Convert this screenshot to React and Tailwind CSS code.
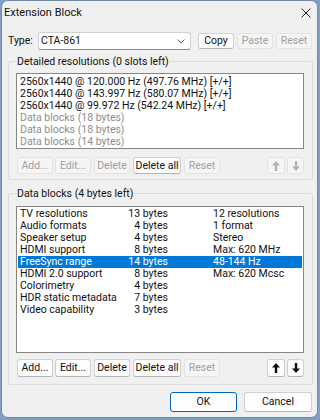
import React from 'react';

const resolutions = [
  { text: '2560x1440 @ 120.000 Hz (497.76 MHz) [+/+]', on: true },
  { text: '2560x1440 @ 143.997 Hz (580.07 MHz) [+/+]', on: true },
  { text: '2560x1440 @ 99.972 Hz (542.24 MHz) [+/+]', on: true },
  { text: 'Data blocks (18 bytes)', on: false },
  { text: 'Data blocks (18 bytes)', on: false },
  { text: 'Data blocks (14 bytes)', on: false },
];

const blocks = [
  ['TV resolutions', '13 bytes', '12 resolutions'],
  ['Audio formats', '4 bytes', '1 format'],
  ['Speaker setup', '4 bytes', 'Stereo'],
  ['HDMI support', '8 bytes', 'Max: 620 MHz'],
  ['FreeSync range', '14 bytes', '48-144 Hz'],
  ['HDMI 2.0 support', '8 bytes', 'Max: 620 Mcsc'],
  ['Colorimetry', '4 bytes', ''],
  ['HDR static metadata', '7 bytes', ''],
  ['Video capability', '3 bytes', ''],
];

function Btn({ children, disabled, className = '' }) {
  return (
    <div
      className={[
        'flex items-center justify-center whitespace-nowrap rounded-[3px] border leading-[12px]',
        disabled
          ? 'border-[#e3e3e3] bg-[#f5f5f5] text-[#a0a0a0]'
          : 'border-[#d0d0d0] border-b-[#b5b5b5] bg-[#fdfdfd] text-[#111]',
        className,
      ].join(' ')}
    >
      {children}
    </div>
  );
}

function Arrow({ down, color }) {
  return (
    <svg width="8" height="10" viewBox="0 0 8 10" className={down ? 'rotate-180' : ''}>
      <polygon points="4,0 0,4.5 2.8,4.5 2.8,10 5.2,10 5.2,4.5 8,4.5" fill={color} />
    </svg>
  );
}

function ButtonRow({ live, className = '' }) {
  return (
    <div className={'flex items-center pr-[8px] ' + className}>
      <Btn disabled={!live} className="ml-[8px] h-full w-[36px]">Add...</Btn>
      <Btn disabled={!live} className="ml-[2px] h-full w-[36px]">Edit...</Btn>
      <Btn disabled={!live} className="ml-[3px] h-full w-[36px]">Delete</Btn>
      <Btn className="ml-[3px] h-full w-[48px]">Delete all</Btn>
      <Btn disabled className="ml-[3px] h-full w-[36px]">Reset</Btn>
      <Btn disabled={!live} className="ml-auto h-full w-[18px]">
        <Arrow color={live ? '#111' : '#b4b4b4'} />
      </Btn>
      <Btn disabled={!live} className="ml-[2px] h-full w-[17px]">
        <Arrow down color={live ? '#111' : '#b4b4b4'} />
      </Btn>
    </div>
  );
}

function GroupLabel({ children }) {
  return (
    <div className="-mt-[6px] ml-[7px] w-fit bg-[#f0f0f0] px-[1px] leading-[12px] text-[#111]">
      {children}
    </div>
  );
}

export default function App() {
  return (
    <div className="h-[420px] w-[320px] overflow-hidden bg-[#7f9fc4] pl-[1px] font-['Roboto',sans-serif] text-[10.5px]">
      <div className="h-[418px] w-[317px] rounded-[7px] border border-[#6f8aa8] bg-[#f0f0f0]">
        <div className="flex h-[24px] items-center justify-between pl-[2px] pr-[6px] text-[11px] text-[#111]">
          <span>Extension Block</span>
          <svg width="10" height="10" viewBox="0 0 10 10">
            <path d="M0.5 0.5 L9.5 9.5 M9.5 0.5 L0.5 9.5" stroke="#222" strokeWidth="1" />
          </svg>
        </div>

        <div className="mt-[7px] flex h-[18px] items-center pl-[6px]">
          <span className="w-[30px] text-[#111]">Type:</span>
          <div className="flex h-[18px] w-[153px] items-center justify-between rounded-[3px] border border-[#d0d0d0] border-b-[#8a8a8a] bg-white pl-[2px] pr-[5px] text-[#111]">
            <span>CTA-861</span>
            <svg width="8" height="5" viewBox="0 0 8 5">
              <path d="M0.5 0.5 L4 4 L7.5 0.5" fill="none" stroke="#606060" strokeWidth="1" />
            </svg>
          </div>
          <Btn className="ml-[7px] h-[16px] w-[36px]">Copy</Btn>
          <Btn disabled className="ml-[3px] h-[16px] w-[36px]">Paste</Btn>
          <Btn disabled className="ml-[3px] h-[16px] w-[36px]">Reset</Btn>
        </div>

        <div className="ml-[6px] mt-[11px] h-[119px] w-[305px] rounded-[2px] border border-[#dcdcdc]">
          <GroupLabel>Detailed resolutions (0 slots left)</GroupLabel>
          <div className="ml-[7px] mt-[5px] h-[76px] w-[288px] border border-[#868686] bg-white px-[1px] pt-[2px]">
            {resolutions.map((r, i) => (
              <div
                key={i}
                className={'h-[12px] pl-[2px] leading-[12px] ' + (r.on ? 'text-[#111]' : 'text-[#8d8d8d]')}
              >
                {r.text}
              </div>
            ))}
          </div>
          <ButtonRow className="mt-[8px] h-[17px]" />
        </div>

        <div className="ml-[6px] mt-[13px] h-[192px] w-[305px] rounded-[2px] border border-[#dcdcdc]">
          <GroupLabel>Data blocks (4 bytes left)</GroupLabel>
          <div className="ml-[7px] mt-[6px] h-[147px] w-[288px] border border-[#868686] bg-white px-[1px] pt-[1px]">
            {blocks.map((b, i) => {
              const sel = b[0] === 'FreeSync range';
              return (
                <div
                  key={i}
                  className={
                    'flex h-[12px] pl-[2px] leading-[12px] whitespace-nowrap ' +
                    (sel ? 'bg-[#0078d7] text-white' : 'text-[#111]')
                  }
                >
                  <span className="w-[108px]">{b[0]}</span>
                  <span className="w-[40px] text-right">{b[1]}</span>
                  <span className="ml-[45px]">{b[2]}</span>
                </div>
              );
            })}
          </div>
          <ButtonRow live className="mt-[6px] h-[18px]" />
        </div>

        <div className="mt-[7px] flex justify-end gap-[7px] pr-[5px]">
          <Btn className="h-[20px] w-[67px] !border-[#0067c0]">OK</Btn>
          <Btn className="h-[20px] w-[68px]">Cancel</Btn>
        </div>
      </div>
    </div>
  );
}
